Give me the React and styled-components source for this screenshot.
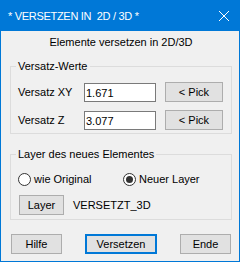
import React from 'react';
import styled, { createGlobalStyle } from 'styled-components';

const Global = createGlobalStyle`
  html, body { margin: 0; padding: 0; background: #f0f0f0; }
  body { font-family: "Liberation Sans", Arial, sans-serif; font-size: 11px; color: #000; }
  * { box-sizing: border-box; }
`;

const Window = styled.div`
  width: 240px;
  height: 262px;
  border: 1px solid #0078d7;
  background: #f0f0f0;
  display: flex;
  flex-direction: column;
`;

const TitleBar = styled.div`
  height: 30px;
  flex-shrink: 0;
  background: #0078d7;
  color: #fff;
  display: flex;
  align-items: center;
  padding-left: 7px;
`;

const Title = styled.div`
  flex: 1;
  font-size: 11px;
  letter-spacing: -0.3px;
  white-space: pre;
`;

const CloseButton = styled.div`
  width: 30px;
  height: 30px;
  display: flex;
  align-items: center;
  justify-content: center;
`;

const Body = styled.div`
  flex: 1;
  display: flex;
  flex-direction: column;
  padding: 5px 0 7px 9px;
`;

const Heading = styled.div`
  width: 222px;
  text-align: center;
  line-height: 13px;
  height: 13px;
`;

const Group = styled.div`
  position: relative;
  width: 222px;
  border: 1px solid #dcdcdc;
  margin-top: ${p => p.$mt}px;
  padding: ${p => p.$pad};
`;

const Legend = styled.span`
  position: absolute;
  top: -7px;
  left: 5px;
  padding: 0 2px;
  background: #f0f0f0;
  line-height: 13px;
  white-space: nowrap;
`;

const FieldRow = styled.div`
  display: flex;
  align-items: flex-end;
  height: 20px;
  margin-top: ${p => p.$mt || 0}px;
`;

const Label = styled.span`
  width: 66px;
  align-self: center;
  line-height: 13px;
  padding-top: 1px;
`;

const TextBox = styled.input`
  width: 72px;
  height: 19px;
  border: 1px solid #7a7a7a;
  background: #fff;
  padding: 0 1px;
  margin: 0 9px 0 0;
  font: 11px "Liberation Sans", Arial, sans-serif;
  color: #000;
  outline: none;
`;

const Button = styled.button`
  width: ${p => p.$w}px;
  height: 20px;
  padding: 0;
  margin: 0 0 0 ${p => p.$ml || 0}px;
  background: #e1e1e1;
  border: ${p => (p.$primary ? '2px solid #0078d7' : '1px solid #adadad')};
  font: 11px "Liberation Sans", Arial, sans-serif;
  color: #000;
  line-height: 13px;
`;

const RadioRow = styled.div`
  display: grid;
  grid-template-columns: 105px 1fr;
  height: 13px;
`;

const RadioOption = styled.label`
  display: flex;
  align-items: center;
  gap: 3px;
  line-height: 13px;
`;

const RadioCircle = styled.span`
  width: 13px;
  height: 13px;
  border-radius: 50%;
  border: 1px solid #333;
  background: #fff;
  display: flex;
  align-items: center;
  justify-content: center;
  flex-shrink: 0;
  &::after {
    content: '';
    width: 7px;
    height: 7px;
    border-radius: 50%;
    background: ${p => (p.$checked ? '#333' : 'transparent')};
  }
`;

const LayerRow = styled.div`
  display: flex;
  align-items: center;
  height: 20px;
  margin-top: 9px;
  gap: 9px;
`;

const LayerName = styled.span`
  line-height: 13px;
`;

const ButtonBar = styled.div`
  display: flex;
  gap: 23px;
  margin-top: 14px;
  margin-left: 1px;
`;

export default function App() {
  return (
    <>
      <Global />
      <Window>
        <TitleBar>
          <Title>{'* VERSETZEN IN  2D / 3D *'}</Title>
          <CloseButton>
            <svg width="10" height="10" viewBox="0 0 10 10">
              <path d="M0 0 L10 10 M10 0 L0 10" stroke="#fff" strokeWidth="1" fill="none" />
            </svg>
          </CloseButton>
        </TitleBar>
        <Body>
          <Heading>Elemente versetzen in 2D/3D</Heading>
          <Group $mt={17} $pad="15px 0 3px 7px">
            <Legend>Versatz-Werte</Legend>
            <FieldRow>
              <Label>Versatz XY</Label>
              <TextBox readOnly value="1.671" />
              <Button $w={58}>&lt; Pick</Button>
            </FieldRow>
            <FieldRow $mt={8}>
              <Label>Versatz Z</Label>
              <TextBox readOnly value="3.077" />
              <Button $w={58}>&lt; Pick</Button>
            </FieldRow>
          </Group>
          <Group $mt={20} $pad="18px 0 4px 7px">
            <Legend>Layer des neues Elementes</Legend>
            <RadioRow>
              <RadioOption>
                <RadioCircle />
                wie Original
              </RadioOption>
              <RadioOption>
                <RadioCircle $checked />
                Neuer Layer
              </RadioOption>
            </RadioRow>
            <LayerRow>
              <Button $w={45} $ml={1}>Layer</Button>
              <LayerName>VERSETZT_3D</LayerName>
            </LayerRow>
          </Group>
          <ButtonBar>
            <Button $w={51}>Hilfe</Button>
            <Button $w={72} $primary>Versetzen</Button>
            <Button $w={51}>Ende</Button>
          </ButtonBar>
        </Body>
      </Window>
    </>
  );
}
